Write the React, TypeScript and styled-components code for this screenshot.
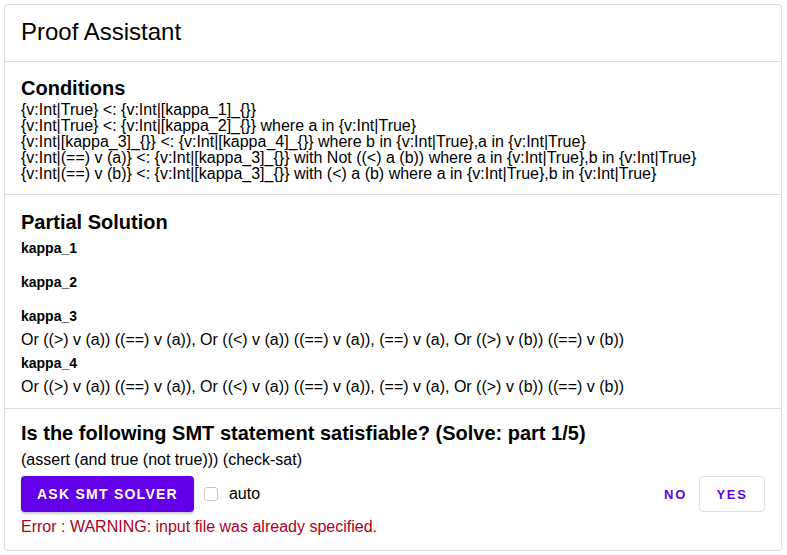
import React from "react";
import styled, { createGlobalStyle } from "styled-components";

const Global = createGlobalStyle`
  html, body { margin: 0; padding: 0; background: #fff; }
  body { font-family: "Liberation Sans", Arial, sans-serif; color: #000; }
  * { box-sizing: border-box; }
`;

const Page = styled.div`
  padding: 4px 5px 4px 4px;
`;

const Card = styled.div`
  border: 1px solid #dcdcdc;
  border-radius: 4px;
  background: #fff;
  display: flex;
  flex-direction: column;
`;

const Header = styled.div`
  padding: 13px 16px 15px;
  border-bottom: 1px solid #dcdcdc;
`;

const Title = styled.h1`
  margin: 0;
  font-size: 24px;
  font-weight: 400;
  line-height: 28px;
`;

const Section = styled.section<{ $pad: string; $last?: boolean }>`
  padding: ${(p) => p.$pad};
  border-bottom: ${(p) => (p.$last ? "none" : "1px solid #dcdcdc")};
`;

const Heading = styled.h2`
  margin: 0;
  font-size: 20px;
  font-weight: 700;
  line-height: 24px;
`;

const CondList = styled.div`
  font-size: 16px;
  line-height: 16px;
  margin-top: 2px;
`;

const Line = styled.div`
  white-space: nowrap;
`;

const SolList = styled.div``;

const SolItem = styled.div``;

const SolLabel = styled.div`
  font-size: 14px;
  font-weight: 700;
  line-height: 17px;
  margin: 6px 0;
`;

const SolValue = styled.div<{ $empty?: boolean }>`
  font-size: 16px;
  line-height: 18px;
  min-height: ${(p) => (p.$empty ? "5px" : "18px")};
  white-space: nowrap;
`;

const Statement = styled.div`
  font-size: 16px;
  line-height: 18px;
  margin-top: 6px;
`;

const ActionRow = styled.div`
  display: flex;
  align-items: center;
  margin-top: 7px;
`;

const PrimaryButton = styled.button`
  height: 36px;
  padding: 0 16px;
  border: none;
  border-radius: 4px;
  background: #6200ea;
  color: #fff;
  font-family: "Liberation Sans", Arial, sans-serif;
  font-weight: 700;
  font-size: 14px;
  letter-spacing: 1.25px;
  text-transform: uppercase;
  box-shadow: 0 2px 2px rgba(0, 0, 0, 0.2);
`;

const CheckLabel = styled.label`
  display: flex;
  align-items: center;
  gap: 11px;
  margin-left: 10px;
  font-size: 16px;
`;

const CheckBox = styled.span`
  width: 14px;
  height: 14px;
  border: 1px solid #c8c8c8;
  border-radius: 3px;
  background: #fff;
`;

const Spacer = styled.div`
  flex: 1;
`;

const TextButton = styled.button<{ $outlined?: boolean }>`
  height: 36px;
  padding: 0 ${(p) => (p.$outlined ? "15px" : "0")};
  min-width: ${(p) => (p.$outlined ? "66px" : "0")};
  margin-left: ${(p) => (p.$outlined ? "12px" : "0")};
  border: ${(p) => (p.$outlined ? "1px solid #e0e0e0" : "none")};
  border-radius: 4px;
  background: #fff;
  color: #6200ea;
  font-family: "Liberation Sans", Arial, sans-serif;
  font-weight: 700;
  font-size: 13px;
  letter-spacing: 0.13em;
  text-transform: uppercase;
`;

const ErrorText = styled.div`
  color: #b00020;
  font-size: 16px;
  line-height: 18px;
  margin-top: 6px;
`;

const conditions = [
  "{v:Int|True} <: {v:Int|[kappa_1]_{}}",
  "{v:Int|True} <: {v:Int|[kappa_2]_{}} where a in {v:Int|True}",
  "{v:Int|[kappa_3]_{}} <: {v:Int|[kappa_4]_{}} where b in {v:Int|True},a in {v:Int|True}",
  "{v:Int|(==) v (a)} <: {v:Int|[kappa_3]_{}} with Not ((<) a (b)) where a in {v:Int|True},b in {v:Int|True}",
  "{v:Int|(==) v (b)} <: {v:Int|[kappa_3]_{}} with (<) a (b) where a in {v:Int|True},b in {v:Int|True}",
];

const orLine =
  "Or ((>) v (a)) ((==) v (a)), Or ((<) v (a)) ((==) v (a)), (==) v (a), Or ((>) v (b)) ((==) v (b))";

const solution = [
  { name: "kappa_1", value: "" },
  { name: "kappa_2", value: "" },
  { name: "kappa_3", value: orLine },
  { name: "kappa_4", value: orLine },
];

export default function App() {
  return (
    <Page>
      <Global />
      <Card>
        <Header>
          <Title>Proof Assistant</Title>
        </Header>
        <Section $pad="14px 16px 12px">
          <Heading>Conditions</Heading>
          <CondList>
            {conditions.map((c, i) => (
              <Line key={i}>{c}</Line>
            ))}
          </CondList>
        </Section>
        <Section $pad="15px 16px 12px">
          <Heading>Partial Solution</Heading>
          <SolList>
            {solution.map((s) => (
              <SolItem key={s.name}>
                <SolLabel>{s.name}</SolLabel>
                <SolValue $empty={!s.value}>{s.value}</SolValue>
              </SolItem>
            ))}
          </SolList>
        </Section>
        <Section $pad="12px 16px 14px" $last>
          <Heading>Is the following SMT statement satisfiable? (Solve: part 1/5)</Heading>
          <Statement>(assert (and true (not true))) (check-sat)</Statement>
          <ActionRow>
            <PrimaryButton>Ask SMT Solver</PrimaryButton>
            <CheckLabel>
              <CheckBox />
              auto
            </CheckLabel>
            <Spacer />
            <TextButton>No</TextButton>
            <TextButton $outlined>Yes</TextButton>
          </ActionRow>
          <ErrorText>Error : WARNING: input file was already specified.</ErrorText>
        </Section>
      </Card>
    </Page>
  );
}
